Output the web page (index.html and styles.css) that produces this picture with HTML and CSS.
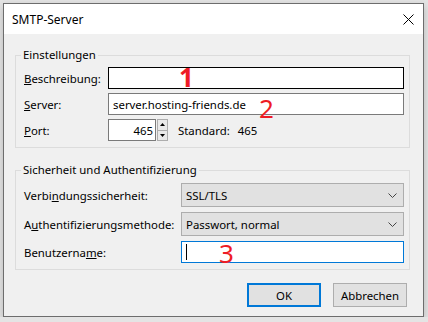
FILE: index.html
```html
<!DOCTYPE html>
<html lang="de">
<head>
  <meta charset="UTF-8">
  <title>SMTP-Server</title>
  <link rel="stylesheet" href="styles.css">
</head>
<body>
  <div class="window">
    <div class="titlebar">
      <span class="title">SMTP-Server</span>
      <svg class="close" width="11" height="11" viewBox="0 0 11 11">
        <path d="M0.5 0.5 L10.5 10.5 M10.5 0.5 L0.5 10.5" stroke="#000" stroke-width="1" fill="none"/>
      </svg>
    </div>

    <div class="content">
      <fieldset class="group">
        <legend>Einstellungen</legend>
        <div class="form-grid general">
          <span class="label"><u>B</u>eschreibung:</span>
          <div class="field field-hover">
            <span class="marker marker-1">1</span>
          </div>

          <span class="label"><u>S</u>erver:</span>
          <div class="field">
            server.hosting-friends.de
            <span class="marker marker-2">2</span>
          </div>

          <span class="label"><u>P</u>ort:</span>
          <div class="port">
            <div class="field port-input">465</div>
            <div class="spin">
              <span class="spin-btn"><svg width="5" height="3" viewBox="0 0 5 3"><path d="M0 3 L2.5 0 L5 3 Z" fill="#000"/></svg></span>
              <span class="spin-btn"><svg width="5" height="3" viewBox="0 0 5 3"><path d="M0 0 L2.5 3 L5 0 Z" fill="#000"/></svg></span>
            </div>
            <span class="std">Standard:</span>
            <span class="std-value">465</span>
          </div>
        </div>
      </fieldset>

      <fieldset class="group">
        <legend>Sicherheit und Authentifizierung</legend>
        <div class="form-grid security">
          <span class="label">Verbi<u>n</u>dungssicherheit:</span>
          <div class="select">
            <span>SSL/TLS</span>
            <svg width="9" height="5" viewBox="0 0 9 5"><path d="M0.5 0.5 L4.5 4.5 L8.5 0.5" stroke="#444" fill="none"/></svg>
          </div>

          <span class="label">A<u>u</u>thentifizierungsmethode:</span>
          <div class="select">
            <span>Passwort, normal</span>
            <svg width="9" height="5" viewBox="0 0 9 5"><path d="M0.5 0.5 L4.5 4.5 L8.5 0.5" stroke="#444" fill="none"/></svg>
          </div>

          <span class="label">Benutzerna<u>m</u>e:</span>
          <div class="field field-active">
            <span class="caret"></span>
            <span class="marker marker-3">3</span>
          </div>
        </div>
      </fieldset>

      <div class="actions">
        <button class="btn btn-default">OK</button>
        <button class="btn">Abbrechen</button>
      </div>
    </div>
  </div>
</body>
</html>
```

FILE: styles.css
```css
* {
  box-sizing: border-box;
}

body {
  margin: 0;
  padding: 3px 0 0 3px;
  background-color: #e4e4e4;
  font-family: "Noto Sans", sans-serif;
  font-size: 11.4px;
  color: #000;
}

.window {
  width: 421px;
  height: 314px;
  border: 1px solid #6d6d6d;
  background-color: #f0f0f0;
  box-shadow: 0 3px 8px rgba(0, 0, 0, 0.2);
  display: flex;
  flex-direction: column;
}

.titlebar {
  height: 30px;
  background-color: #fff;
  display: flex;
  align-items: center;
  justify-content: space-between;
  padding: 0 9px 0 8px;
  font-size: 12px;
}

.close {
  display: block;
}

.content {
  flex: 1;
  padding: 13px 13px 0 11px;
}

.group {
  margin: 0;
  min-width: 0;
  border: 1px solid #dcdcdc;
  padding: 4px 5px 6px 8px;
}

.group + .group {
  margin-top: 14px;
}

.group legend {
  padding: 0 2px;
  margin-left: -3px;
  line-height: 16px;
}

.form-grid {
  display: grid;
  align-items: center;
}

.general {
  grid-template-columns: 84px 1fr;
  grid-auto-rows: 22px;
  row-gap: 4px;
}

.security {
  grid-template-columns: 157px 1fr;
  grid-template-rows: 24px 24px 22px;
  row-gap: 5px;
  padding-top: 1px;
}

.label {
  white-space: nowrap;
}

.field {
  position: relative;
  height: 22px;
  border: 1px solid #7a7a7a;
  background-color: #fff;
  display: flex;
  align-items: center;
  padding: 0 4px;
  white-space: nowrap;
}

.field-hover {
  border-color: #000;
}

.field-active {
  border-color: #0078d7;
}

.caret {
  width: 1px;
  height: 16px;
  background-color: #000;
}

.port {
  display: flex;
  align-items: center;
  height: 22px;
}

.port-input {
  width: 48px;
  justify-content: flex-end;
  padding-right: 2px;
}

.spin {
  width: 11px;
  height: 22px;
  display: flex;
  flex-direction: column;
  margin-left: 1px;
}

.spin-btn {
  flex: 1;
  border: 1px solid #adadad;
  background-color: #e9e9e9;
  display: flex;
  align-items: center;
  justify-content: center;
}

.spin-btn + .spin-btn {
  border-top: none;
}

.spin-btn svg {
  display: block;
}

.std {
  margin-left: 10px;
}

.std-value {
  margin-left: 8px;
}

.select {
  height: 24px;
  border: 1px solid #adadad;
  background-color: #e1e1e1;
  display: flex;
  align-items: center;
  justify-content: space-between;
  padding: 0 6px 0 4px;
}

.select svg {
  display: block;
}

.marker {
  position: absolute;
  font-size: 26px;
  line-height: 1;
  color: #ee1c25;
}

.marker-1 {
  left: 70px;
  top: -4px;
  font-weight: bold;
}

.marker-2 {
  left: 150px;
  top: 1px;
}

.marker-3 {
  left: 37px;
  top: -2px;
}

.actions {
  display: flex;
  justify-content: flex-end;
  gap: 12px;
  margin-top: 13px;
  padding-right: 3px;
}

.btn {
  width: 74px;
  height: 24px;
  border: 1px solid #adadad;
  background-color: #e1e1e1;
  font-family: inherit;
  font-size: 11.4px;
  color: #000;
  padding: 0;
}

.btn-default {
  border: 2px solid #0078d7;
}
```
